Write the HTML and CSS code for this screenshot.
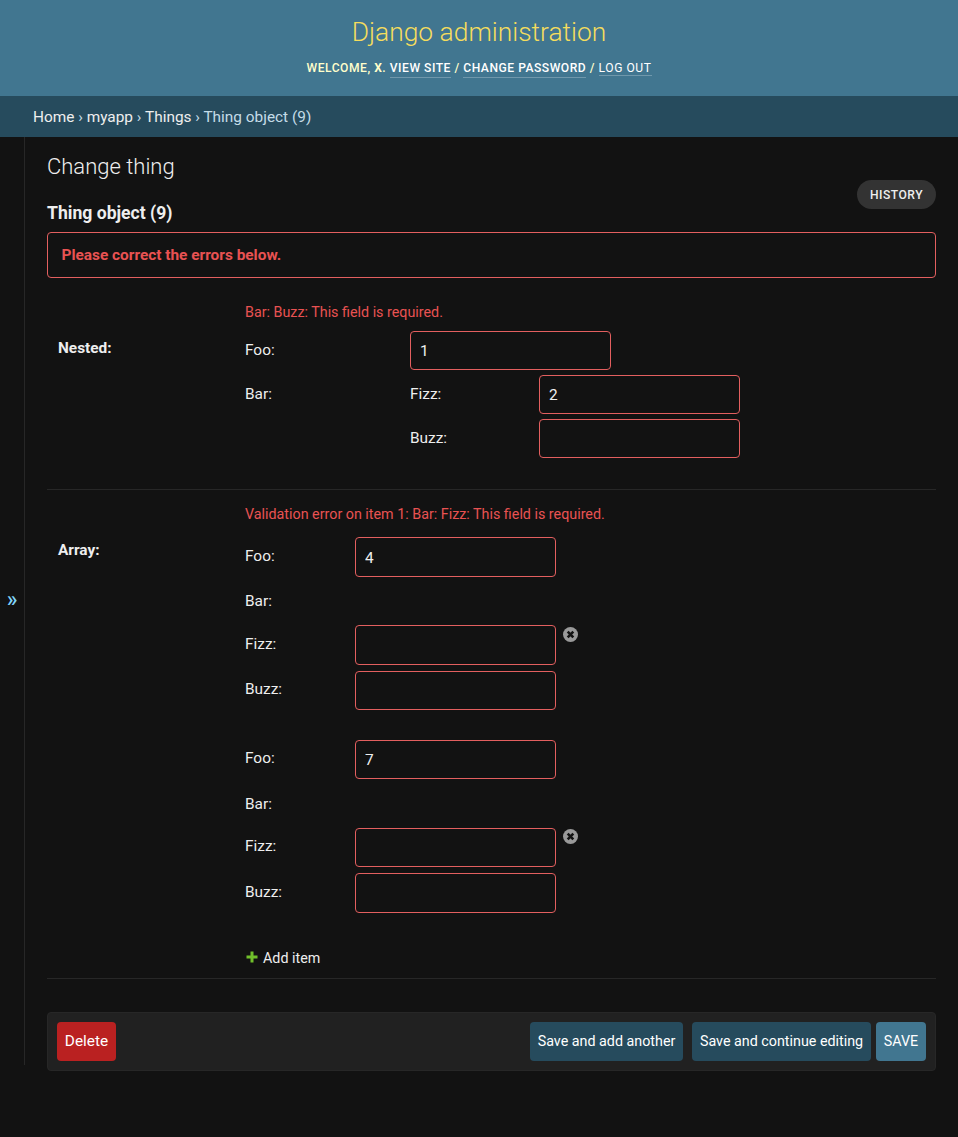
FILE: index.html
```html
<!DOCTYPE html>
<html lang="en">
<head>
<meta charset="utf-8">
<title>Thing object (9) | Change thing | Django site admin</title>
<link rel="stylesheet" href="styles.css">
</head>
<body>
<header class="header">
  <div class="site-name">Django administration</div>
  <div class="user-tools">Welcome, <strong>X</strong>. <a href="#">View site</a> / <a href="#">Change password</a> / <button class="logout" type="button">Log out</button></div>
</header>
<nav class="breadcrumbs"><a href="#">Home</a> › <a href="#">myapp</a> › <a href="#">Things</a> › Thing object (9)</nav>
<div class="main">
  <button class="nav-toggle" type="button" aria-label="Toggle navigation">»</button>
  <main class="content">
    <h1>Change thing</h1>
    <div class="title-row">
      <h2>Thing object (9)</h2>
      <a class="history" href="#">History</a>
    </div>
    <p class="errornote">Please correct the errors below.</p>

    <section class="form-row nested">
      <p class="error">Bar: Buzz: This field is required.</p>
      <label class="name">Nested:</label>
      <div class="fields">
        <label>Foo:</label><input type="text" value="1">
        <label>Bar:</label>
        <div class="subfields">
          <label>Fizz:</label><input type="text" value="2">
          <label>Buzz:</label><input type="text">
        </div>
      </div>
    </section>

    <section class="form-row array">
      <p class="error">Validation error on item 1: Bar: Fizz: This field is required.</p>
      <label class="name">Array:</label>
      <div class="items">
        <div class="item">
          <div class="grid first">
            <label>Foo:</label><input type="text" value="4">
            <label class="group">Bar:</label>
            <label>Fizz:</label><input type="text">
            <label class="last">Buzz:</label><input type="text">
          </div>
          <svg class="remove" viewBox="0 0 15 15"><circle cx="7.5" cy="7.5" r="7.5"/><path d="M4.7 4.7l5.6 5.6M10.3 4.7l-5.6 5.6"/></svg>
        </div>
        <div class="item">
          <div class="grid second">
            <label>Foo:</label><input type="text" value="7">
            <label class="group">Bar:</label>
            <label>Fizz:</label><input type="text">
            <label class="last">Buzz:</label><input type="text">
          </div>
          <svg class="remove" viewBox="0 0 15 15"><circle cx="7.5" cy="7.5" r="7.5"/><path d="M4.7 4.7l5.6 5.6M10.3 4.7l-5.6 5.6"/></svg>
        </div>
        <a class="add" href="#"><svg viewBox="0 0 12 12"><path d="M6 .5v11M.5 6h11"/></svg>Add item</a>
      </div>
    </section>

    <div class="submit-row">
      <a class="btn delete" href="#">Delete</a>
      <button class="btn another" type="button">Save and add another</button>
      <button class="btn continue" type="button">Save and continue editing</button>
      <button class="btn save" type="button">SAVE</button>
    </div>
  </main>
</div>
</body>
</html>
```

FILE: styles.css
```css
* { box-sizing: border-box; }
body {
  margin: 0;
  min-height: 1137px;
  background: #121212;
  color: #eee;
  font: 14.3px/20px Roboto, sans-serif;
}
a { color: inherit; text-decoration: none; }
h1, h2, p { margin: 0; }
button { font-family: inherit; border: 0; background: none; padding: 0; }

.header {
  height: 96px;
  padding-top: 15px;
  background: #417690;
  color: #ffc;
  text-align: center;
}
.site-name { color: #f5dd5d; font-size: 26.4px; font-weight: 300; line-height: 34px; }
.user-tools {
  margin-top: 9px;
  font-size: 12.1px;
  font-weight: 500;
  line-height: 20px;
  letter-spacing: .52px;
  text-transform: uppercase;
}
.user-tools a { color: #fff; padding-bottom: 2px; border-bottom: 1px solid rgba(255,255,255,.25); }
.logout {
  color: #fff;
  font-size: 12.1px;
  line-height: 14px;
  letter-spacing: .55px;
  text-transform: uppercase;
  border-bottom: 1px solid rgba(255,255,255,.25);
}

.breadcrumbs {
  height: 41px;
  padding: 1px 0 0 33px;
  background: #264b5d;
  color: #c4dce8;
  font-size: 15.4px;
  line-height: 41px;
}
.breadcrumbs a { color: #eee; }

.main { display: flex; align-items: flex-start; }
.nav-toggle {
  width: 25px;
  height: 928px;
  padding-bottom: 4px;
  border-right: 1px solid #272727;
  color: #81d4fa;
  font-size: 22px;
  font-weight: 500;
}
.content { flex: 1; padding: 15px 22px 0; }
h1 { font-size: 22px; font-weight: 300; line-height: 30px; color: #eee; }
.title-row { display: flex; justify-content: space-between; height: 50px; }
h2 { font-size: 17.6px; font-weight: 700; line-height: 24px; padding-top: 19px; }
.history {
  width: 79px;
  height: 29px;
  margin-top: -2px;
  padding-top: 1px;
  border-radius: 15px;
  background: #333;
  font-size: 12.1px;
  font-weight: 500;
  line-height: 29px;
  letter-spacing: .5px;
  text-align: center;
  text-transform: uppercase;
}
.errornote {
  height: 46px;
  padding-left: 13.5px;
  border: 1px solid #e35f5f;
  border-radius: 4px;
  color: #e95252;
  font-size: 15.4px;
  font-weight: 700;
  line-height: 44px;
}

.form-row {
  display: grid;
  grid-template-columns: 198px 1fr;
  align-items: start;
  border-bottom: 1px solid #272727;
}
.error { grid-column: 2; color: #e95252; }
label { font-size: 15.4px; }
.name { padding-left: 11px; font-weight: 700; }
.nested { height: 212px; padding-top: 24px; row-gap: 9px; grid-template-rows: 20px 1fr; }
.array { height: 489px; padding-top: 14px; row-gap: 13px; grid-template-rows: 20px 1fr; }
.nested .name { padding-top: 7px; }
.array .name { padding-top: 3px; }

input {
  width: 201px;
  height: 39px;
  padding: 0 9px;
  border: 1px solid #e35f5f;
  border-radius: 4px;
  outline: 0;
  background: #121212;
  color: #eee;
  font: 15.4px Roboto, sans-serif;
}
.fields { display: grid; grid-template-columns: 165px 1fr; row-gap: 5px; }
.subfields { display: grid; grid-template-columns: 129px 201px; row-gap: 5px; }
.fields label { padding-top: 9px; }

.items { display: flex; flex-direction: column; align-items: flex-start; }
.item { display: flex; align-items: flex-start; gap: 7px; }
.item + .item { margin-top: 30px; }
.grid { display: grid; grid-template-columns: 110px 201px; }
.first { height: 173px; grid-template-rows: 40px 48px 46px 39px; }
.second { height: 173px; grid-template-rows: 39px 49px 45px 40px; }
.grid label { padding-top: 9px; }
.grid .group { grid-column: 1 / 3; padding-top: 14px; }
.first .last { padding-top: 8px; }
.second label { padding-top: 8px; }
.second .group { padding-top: 15px; }
.second .last { padding-top: 9px; }
.first input:nth-of-type(-n+2), .second input:last-child { height: 40px; }
.first input:first-of-type { padding-top: 1px; }
.remove { width: 15px; height: 15px; margin-top: 89px; fill: #999; }
.first + .remove { margin-top: 89.5px; }
.remove path { stroke: #121212; stroke-width: 2.6; }
.add { display: flex; align-items: center; margin-top: 35px; }
.add svg { width: 12px; height: 12px; margin: -2px 5px 0 1px; }
.add path { stroke: #70bf2b; stroke-width: 3; }

.submit-row {
  display: flex;
  height: 59px;
  margin-top: 33px;
  padding: 9px;
  border: 1px solid #272727;
  border-radius: 4px;
  background: #212121;
}
.btn {
  height: 39px;
  padding-bottom: 1px;
  border-radius: 4px;
  color: #fff;
  font-size: 14.3px;
  line-height: 37px;
  text-align: center;
}
.delete { width: 59px; margin-right: auto; background: #ba2121; font-size: 15.4px; line-height: 38px; }
.another { width: 153px; background: #264b5d; }
.continue { width: 179px; margin-left: 9px; background: #264b5d; }
.save { width: 50px; margin-left: 5px; background: #417690; }
```
